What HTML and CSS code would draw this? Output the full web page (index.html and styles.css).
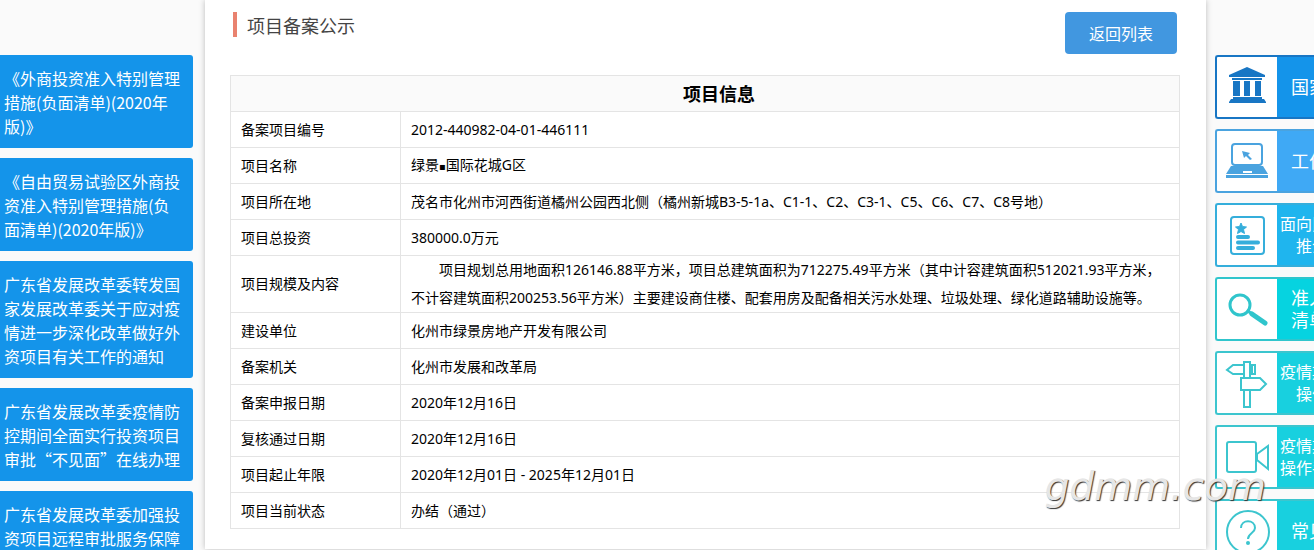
FILE: index.html
```html
<!DOCTYPE html>
<html lang="zh-CN">
<head>
    <meta charset="UTF-8">
    <meta name="viewport" content="width=device-width, initial-scale=1.0">
    <title>项目备案公示</title>
    <link rel="stylesheet" href="styles.css">
</head>
<body>
    <div class="page">
        <nav class="notices">
            <a href="#">《外商投资准入特别管理措施(负面清单)(2020年版)》</a>
            <a href="#">《自由贸易试验区外商投资准入特别管理措施(负面清单)(2020年版)》</a>
            <a href="#">广东省发展改革委转发国家发展改革委关于应对疫情进一步深化改革做好外资项目有关工作的通知</a>
            <a href="#">广东省发展改革委疫情防控期间全面实行投资项目审批“不见面”在线办理</a>
            <a href="#">广东省发展改革委加强投资项目远程审批服务保障</a>
        </nav>

        <main class="content">
            <div class="content-head">
                <h1>项目备案公示</h1>
                <button type="button" class="back">返回列表</button>
            </div>
            <table class="info">
                <thead>
                    <tr><th colspan="2" class="info-title">项目信息</th></tr>
                </thead>
                <tbody>
                    <tr><th scope="row">备案项目编号</th><td>2012-440982-04-01-446111</td></tr>
                    <tr><th scope="row">项目名称</th><td>绿景<span class="dot">▪</span>国际花城G区</td></tr>
                    <tr><th scope="row">项目所在地</th><td>茂名市化州市河西街道橘州公园西北侧（橘州新城B3-5-1a、C1-1、C2、C3-1、C5、C6、C7、C8号地）</td></tr>
                    <tr><th scope="row">项目总投资</th><td>380000.0万元</td></tr>
                    <tr><th scope="row">项目规模及内容</th><td class="scale">项目规划总用地面积126146.88平方米，项目总建筑面积为712275.49平方米（其中计容建筑面积512021.93平方米，不计容建筑面积200253.56平方米）主要建设商住楼、配套用房及配备相关污水处理、垃圾处理、绿化道路辅助设施等。</td></tr>
                    <tr><th scope="row">建设单位</th><td>化州市绿景房地产开发有限公司</td></tr>
                    <tr><th scope="row">备案机关</th><td>化州市发展和改革局</td></tr>
                    <tr><th scope="row">备案申报日期</th><td>2020年12月16日</td></tr>
                    <tr><th scope="row">复核通过日期</th><td>2020年12月16日</td></tr>
                    <tr><th scope="row">项目起止年限</th><td>2020年12月01日 - 2025年12月01日</td></tr>
                    <tr><th scope="row">项目当前状态</th><td>办结（通过）</td></tr>
                </tbody>
            </table>
        </main>

        <nav class="shortcuts">
            <a href="#" class="policy">
                <svg viewBox="0 0 60 60" fill="currentColor">
                    <path d="M30 10 48 18v2H12v-2zM15 21h30v2H15zM16 24h7v15h-7zM27 24h6v15h-6zM38 24h6v15h-6zM16 40h29v2H16zM14 42h33l2 3v1H12v-1z"/>
                </svg>
                <span class="label">国家</span>
            </a>
            <a href="#" class="work">
                <svg viewBox="0 0 60 60" fill="none" stroke="currentColor" stroke-width="2">
                    <rect x="15" y="13" width="30" height="21" rx="3"/>
                    <path d="M14 35h32l5 8H9z" fill="currentColor" stroke="none"/>
                    <path d="M9 44h42v3H9z" fill="currentColor" stroke="none"/>
                    <path d="M26 41h9" stroke="#fff"/>
                    <path d="m25 20 8 2-2 2 4 4-2 1-4-4-2 2z" fill="currentColor" stroke="none"/>
                </svg>
                <span class="label">工作</span>
            </a>
            <a href="#" class="promote">
                <svg viewBox="0 0 60 60" fill="none" stroke="currentColor" stroke-width="2">
                    <rect x="14" y="12" width="33" height="37" rx="3"/>
                    <path d="m24 18 1.500 3.500 4 .5-3 2.500 1 4-3.500-2-3.500 2 1-4-3-2.500 4-.5z" fill="currentColor" stroke-width="1"/>
                    <path d="M21 32h10M21 37.500h20M21 43h15" stroke-width="4" stroke-linecap="round"/>
                </svg>
                <span class="label small">面向民<br><span class="inset">推介</span></span>
            </a>
            <a href="#" class="access">
                <svg viewBox="0 0 60 60" fill="none" stroke="currentColor" stroke-linecap="round">
                    <circle cx="23" cy="26" r="10" stroke-width="3"/>
                    <path d="m31 32 4 3" stroke-width="3"/>
                    <path d="m35 35 13 9" stroke-width="5"/>
                </svg>
                <span class="label">准入<br>清单</span>
            </a>
            <a href="#" class="guide">
                <svg viewBox="0 0 60 60" fill="none" stroke="currentColor" stroke-width="2">
                    <path d="M27 25V9h6v16M27 38v16h6V38M27 21H16l-6-4 6-5h11M33 12h5v9h-5M24 25h19l6 6-6 6H24zM35 12v9"/>
                </svg>
                <span class="label small">疫情期<br><span class="inset">操作</span></span>
            </a>
            <a href="#" class="video">
                <svg viewBox="0 0 60 60" fill="none" stroke="currentColor" stroke-width="2">
                    <rect x="10" y="15" width="29" height="30" rx="2"/>
                    <path d="m40 27 11-8v23l-11-9z"/>
                </svg>
                <span class="label small">疫情期<br>操作手</span>
            </a>
            <a href="#" class="faq">
                <svg viewBox="0 0 60 60" fill="none" stroke="currentColor" stroke-width="2">
                    <circle cx="31" cy="31" r="21"/>
                    <path d="M24 27c0-9 14-9 14 0 0 5-7 5-7 11"/>
                    <circle cx="31" cy="42" r="2" fill="currentColor" stroke="none"/>
                </svg>
                <span class="label">常见</span>
            </a>
        </nav>
    </div>
    <div class="watermark">gdmm.com</div>
</body>
</html>
```
FILE: styles.css
```css
* {
    margin: 0;
    padding: 0;
    box-sizing: border-box;
}
body {
    height: 100vh;
    overflow: hidden;
    background-color: #fafafa;
    color: #000;
    font-family: "Noto Sans", "Noto Sans CJK SC", sans-serif;
    font-size: 14px;
    text-spacing-trim: space-all;
}
a {
    color: #fff;
    text-decoration: none;
}
.page {
    display: flex;
    align-items: flex-start;
}

/* left column */
.notices {
    display: flex;
    flex-direction: column;
    flex: none;
    gap: 10px;
    width: 193px;
    padding-top: 55px;
}
.notices a {
    padding: 11px 10px 10px 4px;
    border-radius: 0 3px 3px 0;
    background-color: #1494ea;
    font-family: "Noto Sans CJK SC", sans-serif;
    font-size: 16px;
    line-height: 24px;
}

/* centre panel */
.content {
    flex: 1;
    margin: 0 9px 0 12px;
    padding: 12px 26px 20px 25px;
    background-color: #fff;
    box-shadow: 0 0 6px rgba(0, 0, 0, 0.25);
}
.content-head {
    display: flex;
    justify-content: space-between;
    align-items: flex-start;
    margin-bottom: 21px;
    padding: 0 3px;
}
h1 {
    padding: 4px 0 0 10px;
    border-left: 4px solid #e9826f;
    color: #444;
    font-size: 18px;
    font-weight: normal;
    line-height: 21px;
}
.back {
    width: 112px;
    height: 42px;
    border: 0;
    border-radius: 4px;
    background-color: #4197e0;
    color: #fff;
    font-family: inherit;
    font-size: 16px;
    cursor: pointer;
}
.info {
    width: 100%;
    border-collapse: collapse;
}
.info th,
.info td {
    height: 36px;
    padding: 0 10px;
    border: 1px solid #e4e4e4;
    font-weight: normal;
    line-height: 28px;
    text-align: left;
}
.info tbody th {
    width: 170px;
}
.info .info-title {
    padding-left: 38px;
    background-color: #fafafa;
    font-size: 18px;
    font-weight: bold;
    text-align: center;
}
.info .scale {
    text-indent: 2em;
}
.dot {
    font-family: "DejaVu Sans", sans-serif;
    font-size: 10px;
}

/* right column */
.shortcuts {
    display: flex;
    flex-direction: column;
    flex: none;
    gap: 10px;
    width: 99px;
    padding-top: 55px;
}
.shortcuts a {
    display: flex;
    align-items: center;
    height: 64px;
    overflow: hidden;
    border: 2px solid;
    border-right: 0;
    border-radius: 3px 0 0 3px;
}
.shortcuts svg {
    flex: none;
    width: 60px;
    height: 60px;
    background-color: #fff;
}
.label {
    flex: 1;
    align-self: stretch;
    align-content: center;
    padding-left: 14px;
    color: #fff;
    font-size: 18px;
    line-height: 22px;
    white-space: nowrap;
}
.small {
    padding-left: 3px;
    font-size: 16px;
}
.inset {
    padding-left: 16px;
}
.policy {
    border-color: #2484c6;
    background-color: #1494ea;
    color: #1876c4;
}
.work {
    border-color: #459fd8;
    background-color: #3fa9f5;
    color: #4aa3df;
}
.promote {
    border-color: #35a9d2;
    background-color: #1fb5ee;
    color: #35aedb;
}
.access {
    border-color: #30bcc8;
    background-color: #06d3e0;
    color: #30c5cc;
}
.guide,
.video,
.faq {
    border-color: #35c1cb;
    background-color: #18d0df;
    color: #3cc5ce;
}

.watermark {
    position: absolute;
    right: 48px;
    bottom: 35px;
    color: #e6e6e6;
    font-family: "DejaVu Sans", sans-serif;
    font-size: 39px;
    font-style: italic;
    line-height: 56px;
    text-shadow: 1px 1px 1px #333;
}
```
